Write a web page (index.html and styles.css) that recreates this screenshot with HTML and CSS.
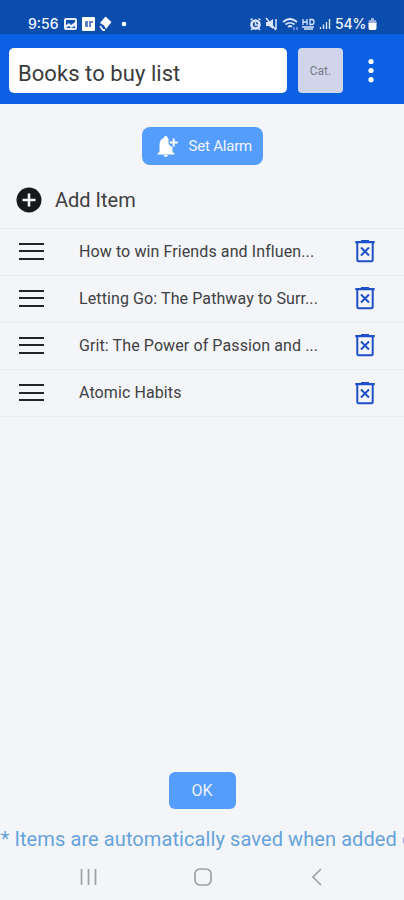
FILE: index.html
```html
<!DOCTYPE html>
<html lang="en">
<head>
<meta charset="utf-8">
<title>Books to buy list</title>
<link rel="stylesheet" href="styles.css">
</head>
<body>
<svg width="0" height="0" class="defs">
  <symbol id="trash" viewBox="0 0 20 24">
    <path d="M.3 3.2H19.7M6 2.2H14" fill="none" stroke="currentColor" stroke-width="2.200"/>
    <path d="M2.300 3V20.800Q2.300 22.300 3.800 22.300H16.200Q17.700 22.300 17.700 20.800V3" fill="none" stroke="currentColor" stroke-width="2"/>
    <path d="M6 8.500 14 16.500M14 8.500 6 16.500" stroke="currentColor" stroke-width="2"/>
  </symbol>
</svg>
<div class="screen">
  <div class="status">
    <span class="time">9:56</span>
    <svg class="notices" width="102" height="18" viewBox="0 0 102 18">
      <path fill="#e7edff" fill-rule="evenodd" d="M2 3H11Q13 3 13 5V13Q13 15 11 15H2Q0 15 0 13V5Q0 3 2 3ZM2 5V10L5 8 7 10 11 7V5ZM2 13H11V11L7 13 5 11Z"/>
      <rect x="18" y="2" width="13" height="14" rx="1" fill="#fff"/>
      <path d="M21 6H24V12H21ZM25 6H29V8H27V12H25Z" fill="#6682bd"/>
      <path d="M41.500 1.500 47.500 7 42 14 40 10.500 36 8Z" fill="#fff"/>
      <path d="M36 11 39 15H41" stroke="#dce6ff" stroke-width="2" fill="none"/>
      <circle cx="60" cy="9" r="2.300" fill="#fff"/>
    </svg>
    <svg class="signals" width="84" height="18" viewBox="0 0 84 18" fill="none" stroke="#dce6ff" stroke-width="1.500">
      <circle cx="6.500" cy="9.500" r="4" stroke-width="2.600"/><path d="M1.500 5 3.500 3.500M9.500 3.500 11.500 5M6.500 7V10H9M2 15 4 13M11 15 9 13"/>
      <path d="M17 7H20L24 4V14L20 11H17Z" fill="#dce6ff" stroke="none"/><path d="M17 3 27 15M27 4V14"/>
      <path d="M34 7Q41 1 48 7M36.500 9.500Q41 6 45.500 9.500M39 12Q41 10 43 12" stroke-width="1.700"/><path d="M45 12V15M48 12V15" stroke="#7f9bef"/>
      <path d="M54 4V10M58 4V10M54 7H58M61 4.500V9.500H63Q65 9.500 65 7 65 4.500 63 4.500ZM53 12H65M55 14H64" stroke-width="1.300"/>
      <path d="M71.500 12V14M74.500 9.500V14M77.500 7V14M80.500 4V14" stroke-width="1.400"/>
    </svg>
    <span class="charge">54%</span>
    <svg class="battery" width="9" height="14" viewBox="0 0 9 14"><path d="M3 1H6V3H3Z" fill="#9ab0df"/><path d="M.5 5Q.5 3 2 3H7Q8.500 3 8.500 5V7H.5Z" fill="#9ab0df"/><path d="M.5 6H8.500V11Q8.500 13 7 13H2Q.5 13 .5 11Z" fill="#fff"/></svg>
  </div>
  <header class="header">
    <div class="list-name"><span class="name-text">Books to buy list</span></div>
    <div class="category"><span class="cat-text">Cat.</span></div>
    <svg class="more" width="8" height="26" viewBox="0 0 8 26" fill="#fff"><circle cx="4" cy="3.500" r="2.600"/><circle cx="4" cy="12.500" r="2.600"/><circle cx="4" cy="21.700" r="2.600"/></svg>
  </header>
  <main class="content">
    <div class="alarm">
      <svg width="21" height="22" viewBox="0 0 21 22" fill="#fff"><path d="M2.500 17V10Q2.500 4 7 3V2.500Q7 .8 8.700 .8T10.500 2.500V3L11.500 4V9L13.500 11 15.500 12V17L17.500 18.500V19.500H.5V18.500Z"/><path d="M6.500 20H11Q10.500 22 8.800 22T6.500 20Z"/><path d="M16.700 3.500V11.500M12.700 7.500H20.700" stroke="#fff" stroke-width="2"/></svg>
      <span class="alarm-text">Set Alarm</span>
    </div>
    <div class="add">
      <svg width="26" height="26" viewBox="0 0 26 26"><circle cx="13" cy="13" r="12.500" fill="#17181a"/><path d="M13 6.500V19.500M6.500 13H19.500" stroke="#f3f5f7" stroke-width="2.600"/></svg>
      <span class="add-text">Add Item</span>
    </div>
    <ul class="items">
      <li class="item"><span class="grip"></span><span class="label">How to win Friends and Influen...</span><svg class="trash"><use href="#trash"/></svg></li>
      <li class="item"><span class="grip"></span><span class="label">Letting Go: The Pathway to Surr...</span><svg class="trash"><use href="#trash"/></svg></li>
      <li class="item"><span class="grip"></span><span class="label">Grit: The Power of Passion and ...</span><svg class="trash"><use href="#trash"/></svg></li>
      <li class="item"><span class="grip"></span><span class="label">Atomic Habits</span><svg class="trash"><use href="#trash"/></svg></li>
    </ul>
  </main>
  <footer class="footer">
    <div class="ok">OK</div>
    <div class="note"><span class="note-text">** Items are automatically saved when added or</span></div>
    <nav class="nav">
      <svg width="18" height="18" viewBox="0 0 18 18"><path d="M1.500 1V17M8.500 1V17M15.500 1V17"/></svg>
      <svg width="18" height="18" viewBox="0 0 18 18"><rect x="1" y="1" width="16" height="16" rx="5"/></svg>
      <svg width="18" height="18" viewBox="0 0 18 18"><path d="M13 1 5 9 13 17"/></svg>
    </nav>
  </footer>
</div>
</body>
</html>
```
FILE: styles.css
```css
* { box-sizing: border-box; }
body { margin: 0; font-family: Roboto, "Liberation Sans", sans-serif; color: #404143; }
svg { display: block; flex: none; }
.defs { position: absolute; }
.screen { width: 404px; height: 900px; display: flex; flex-direction: column; background: #f3f5f8; overflow: hidden; white-space: nowrap; }
.status { height: 34px; flex: none; display: flex; align-items: center; padding: 13px 0 0 28px; background: #0b4dad; color: #f3f6ff; font-family: Inter, sans-serif; font-size: 14px; line-height: 18px; }
.time { width: 36px; font-weight: 500; }
.signals { margin-left: 83px; }
.charge { width: 32px; margin-left: 2px; font-weight: 500; letter-spacing: -.2px; }
.battery { margin-left: 1px; }
.header { height: 70px; flex: none; display: flex; align-items: center; padding: 3px 0 0 9px; background: #0b60e3; }
.list-name { width: 278px; height: 45px; padding-left: 9px; border-radius: 5px; background: #fff; font-size: 22px; line-height: 51px; letter-spacing: .06px; color: #3b3b3b; }
.category { width: 45px; height: 45px; margin-left: 11px; border-radius: 4px; background: #d0d5eb; color: #777b87; font-size: 12px; line-height: 47px; text-align: center; }
.more { margin-left: 24px; }
.content { flex: 1; display: flex; flex-direction: column; padding-top: 23px; }
.alarm { align-self: center; width: 121px; height: 38px; display: flex; align-items: center; gap: 11px; padding-left: 15px; border-radius: 8px; background: #559dfd; color: #f1f6ff; font-size: 15px; letter-spacing: -.2px; }
.add { height: 62.500px; display: flex; align-items: center; gap: 13px; padding: 7px 0 0 16px; font-size: 20px; }
.items { list-style: none; margin: 0; padding: 0; border-top: 1px solid #e6e9ec; }
.item { height: 47.200px; display: flex; align-items: center; padding: 0 0 1px 19px; border-bottom: 1px solid #e9ebee; font-size: 16px; letter-spacing: .1px; background: #f4f5f8; }
.grip { width: 25px; height: 17px; border-top: 2px solid #222428; border-bottom: 2px solid #222428; background: linear-gradient(#222428, #222428) center / 100% 2px no-repeat; }
.label { width: 245px; margin-left: 35px; }
.trash { width: 20px; height: 24px; margin-left: 31px; color: #1e50c8; }
.footer { height: 128px; flex: none; display: flex; flex-direction: column; align-items: center; }
.ok { width: 67px; height: 37px; flex: none; border-radius: 6px; background: #559dfd; color: #e9f2ff; font-size: 16px; line-height: 37px; text-align: center; }
.note { width: 404px; height: 24px; margin-top: 18px; overflow: hidden; color: #66a3dc; font-size: 20px; line-height: 24px; letter-spacing: .09px; }
.note-text { margin-left: -8px; }
.nav { width: 404px; height: 49px; display: flex; align-items: center; justify-content: center; gap: 96px; fill: none; stroke: #a0a1a3; stroke-width: 1.700; padding: 2px 0 0 2px; }
```
